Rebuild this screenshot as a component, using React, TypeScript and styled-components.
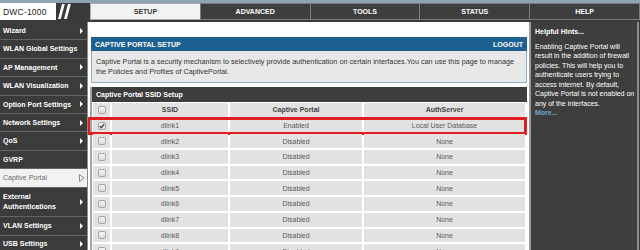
import styled, { createGlobalStyle } from "styled-components";

const GlobalStyle = createGlobalStyle`
  html, body {
    margin: 0;
    padding: 0;
  }
  body {
    width: 640px;
    height: 250px;
    overflow: hidden;
    background: #3c3c3c;
  }
`;

const NAV = [
  { label: "Wizard", arrow: true },
  { label: "WLAN Global Settings" },
  { label: "AP Management", arrow: true },
  { label: "WLAN Visualization", arrow: true },
  { label: "Option Port Settings", arrow: true },
  { label: "Network Settings", arrow: true },
  { label: "QoS", arrow: true },
  { label: "GVRP" },
  { label: "Captive Portal", active: true },
  { label: "External\nAuthentications", arrow: true, tall: true },
  { label: "VLAN Settings", arrow: true },
  { label: "USB Settings", arrow: true },
];

const TABS = ["SETUP", "ADVANCED", "TOOLS", "STATUS", "HELP"];

const SSIDS = Array.from({ length: 9 }, (_, i) => ({
  ssid: `dlink${i + 1}`,
  enabled: i === 0,
  auth: i === 0 ? "Local User Database" : "None",
}));

const HINTS = [
  "Enabling Captive Portal will",
  "result in the addition of firewall",
  "policies. This will help you to",
  "authenticate users trying to",
  "access internet. By default,",
  "Captive Portal is not enabled on",
  "any of the interfaces.",
];

const Shell = styled.div`
  width: 640px;
  height: 250px;
  overflow: hidden;
  display: flex;
  flex-direction: column;
  background: #3c3c3c;
  font-family: "Liberation Sans", Arial, sans-serif;
  font-size: 7px;
`;

/* header: logo + main tabs */
const TopBar = styled.header`
  flex: none;
  height: 22px;
  box-sizing: border-box;
  border-top: 3px solid #8fa3af;
  padding-bottom: 2px;
  display: flex;
  background: #3a3a3a;
`;

const Logo = styled.div`
  width: 56px;
  box-sizing: border-box;
  padding-left: 3px;
  display: flex;
  align-items: center;
  background: #fff;
  color: #222;
  font-size: 8.5px;
  letter-spacing: 0.2px;
`;

const Slashes = styled.svg`
  flex: none;
  width: 35px;
  height: 17px;
`;

const Tabs = styled.nav`
  flex: 1;
  display: flex;
`;

const Tab = styled.div<{ $active?: boolean }>`
  flex: 1;
  display: flex;
  align-items: center;
  justify-content: center;
  box-sizing: border-box;
  border: 1px solid ${({ $active }) => ($active ? "#a9a9a9" : "#7c7c7c")};
  margin-left: -1px;
  background: ${({ $active }) => ($active ? "#f3f3f3" : "#3e3e3e")};
  color: ${({ $active }) => ($active ? "#333" : "#fff")};
  font-weight: bold;
  font-size: 7px;
`;

const Body = styled.div`
  flex: 1;
  min-height: 0;
  display: grid;
  grid-template-columns: 88px 441px 1fr;
`;

/* left navigation */
const Sidebar = styled.aside`
  display: flex;
  flex-direction: column;
  overflow: hidden;
  background: #3b3b3b;
  border-right: 1px solid #8c8c8c;
`;

const NavItem = styled.div<{ $active?: boolean; $tall?: boolean }>`
  flex: none;
  position: relative;
  height: ${({ $tall }) => ($tall ? "28.6px" : "17.4px")};
  display: flex;
  align-items: center;
  padding: 0 0 0 3px;
  border-bottom: 1px solid #646464;
  background: ${({ $active }) => ($active ? "#f2f2f2" : "#3b3b3b")};
  color: ${({ $active }) => ($active ? "#6a6a6a" : "#fff")};
  font-weight: ${({ $active }) => ($active ? "normal" : "bold")};
  line-height: 9.5px;
  white-space: pre;
`;

const Arrow = styled.span`
  position: absolute;
  right: 4px;
  top: 50%;
  margin-top: -3px;
  width: 0;
  height: 0;
  border-top: 3px solid transparent;
  border-bottom: 3px solid transparent;
  border-left: 3px solid #fff;
`;

const OpenArrow = styled.svg`
  position: absolute;
  right: 2px;
  top: 50%;
  margin-top: -4px;
  width: 6px;
  height: 8px;
`;

/* main content */
const Main = styled.main`
  display: flex;
  flex-direction: column;
  overflow: hidden;
  padding: 15px 2px 0 3px;
  background: #fff;
`;

const TitleBar = styled.div`
  flex: none;
  height: 14px;
  display: flex;
  align-items: center;
  justify-content: space-between;
  padding: 0 4px 0 4px;
  background: #1d6193;
  color: #fff;
  font-weight: bold;
  font-size: 7px;
`;

const Intro = styled.p`
  flex: none;
  margin: 0;
  height: 32px;
  box-sizing: border-box;
  padding: 6px 4px 0 4px;
  border: 1px solid #8fb0c4;
  border-top: none;
  background: #e8e8e8;
  color: #333;
  font-size: 7.25px;
  line-height: 9.5px;
  white-space: nowrap;
`;

const Section = styled.section`
  flex: none;
  margin: 4px 0 0 -1px;
  border-left: 2px solid #a2a2a2;
  background: #fff;
`;

const SectionTitle = styled.div`
  height: 15px;
  display: flex;
  align-items: center;
  padding-left: 4px;
  background: #3d3d3d;
  color: #fff;
  font-weight: bold;
`;

const Rows = styled.div`
  display: flex;
  flex-direction: column;
  gap: 2px;
  padding: 1px 2px 0 1px;
`;

const Row = styled.div<{ $highlight?: boolean }>`
  position: relative;
  display: grid;
  grid-template-columns: 17px 116px 132px 1fr;
  gap: 2px;
  height: 13.7px;

  ${({ $highlight }) =>
    $highlight &&
    `
    &::after {
      content: "";
      position: absolute;
      left: -6px;
      right: -2px;
      top: -1.7px;
      bottom: -2.6px;
      border: 3px solid #e31b23;
    }
  `}
`;

const Cell = styled.div<{ $head?: boolean }>`
  display: flex;
  align-items: center;
  justify-content: center;
  background: #e2e2e2;
  color: ${({ $head }) => ($head ? "#444" : "#5a5a5a")};
  font-weight: ${({ $head }) => ($head ? "bold" : "normal")};
`;

const Check = styled.span`
  width: 8px;
  height: 8px;
  box-sizing: border-box;
  display: flex;
  align-items: center;
  justify-content: center;
  border: 1px solid #a8a8a8;
  border-radius: 2px;
  background: linear-gradient(#f6f6f6, #dadada);
`;

/* help column */
const Help = styled.aside`
  overflow: hidden;
  padding: 5px 4px 0 4px;
  background: #3e3e3e;
  border-left: 2px solid #9c9c9c;
  border-right: 2px solid #8a8a8a;
  margin-right: 1px;
  color: #fff;
  line-height: 9.5px;
`;

const HelpTitle = styled.div`
  font-weight: bold;
  margin-bottom: 5px;
`;

const HelpText = styled.p`
  margin: 0;
  white-space: nowrap;
`;

const MoreLink = styled.div`
  margin-top: 0;
  color: #6fa6d2;
  font-weight: bold;
`;

const Checkbox = ({ checked }: { checked?: boolean }) => (
  <Check>
    {checked && (
      <svg width="6" height="6" viewBox="0 0 6 6">
        <path d="M0.8 3.1 L2.4 4.6 L5.2 1.2" fill="none" stroke="#333" strokeWidth="1.3" />
      </svg>
    )}
  </Check>
);

export default function App() {
  return (
    <>
      <GlobalStyle />
      <Shell>
        <TopBar>
          <Logo>DWC-1000</Logo>
          <Slashes viewBox="0 0 35 17">
            <polygon points="2,16 4.8,16 8.8,1 6,1" fill="#fff" />
            <polygon points="8,16 10.8,16 14.8,1 12,1" fill="#fff" />
          </Slashes>
          <Tabs>
            {TABS.map((t) => (
              <Tab key={t} $active={t === "SETUP"}>
                {t}
              </Tab>
            ))}
          </Tabs>
        </TopBar>
        <Body>
          <Sidebar>
            {NAV.map((n) => (
              <NavItem key={n.label} $active={n.active} $tall={n.tall}>
                {n.label}
                {n.arrow && <Arrow />}
                {n.active && (
                  <OpenArrow viewBox="0 0 6 8">
                    <path d="M0.5 0.5 L5 4 L0.5 7.5 Z" fill="none" stroke="#8a8a8a" strokeWidth="1" />
                  </OpenArrow>
                )}
              </NavItem>
            ))}
          </Sidebar>
          <Main>
            <TitleBar>
              <span>CAPTIVE PORTAL SETUP</span>
              <span>LOGOUT</span>
            </TitleBar>
            <Intro>
              Captive Portal is a security mechanism to selectively provide authentication on certain
              interfaces.You can use this page to manage
              <br />
              the Policies and Profiles of CaptivePortal.
            </Intro>
            <Section>
              <SectionTitle>Captive Portal SSID Setup</SectionTitle>
              <Rows>
                <Row>
                  <Cell $head>
                    <Checkbox />
                  </Cell>
                  <Cell $head>SSID</Cell>
                  <Cell $head>Captive Portal</Cell>
                  <Cell $head>AuthServer</Cell>
                </Row>
                {SSIDS.map((s) => (
                  <Row key={s.ssid} $highlight={s.enabled}>
                    <Cell>
                      <Checkbox checked={s.enabled} />
                    </Cell>
                    <Cell>{s.ssid}</Cell>
                    <Cell>{s.enabled ? "Enabled" : "Disabled"}</Cell>
                    <Cell>{s.auth}</Cell>
                  </Row>
                ))}
              </Rows>
            </Section>
          </Main>
          <Help>
            <HelpTitle>Helpful Hints...</HelpTitle>
            {HINTS.map((h) => (
              <HelpText key={h}>{h}</HelpText>
            ))}
            <MoreLink>More...</MoreLink>
          </Help>
        </Body>
      </Shell>
    </>
  );
}
